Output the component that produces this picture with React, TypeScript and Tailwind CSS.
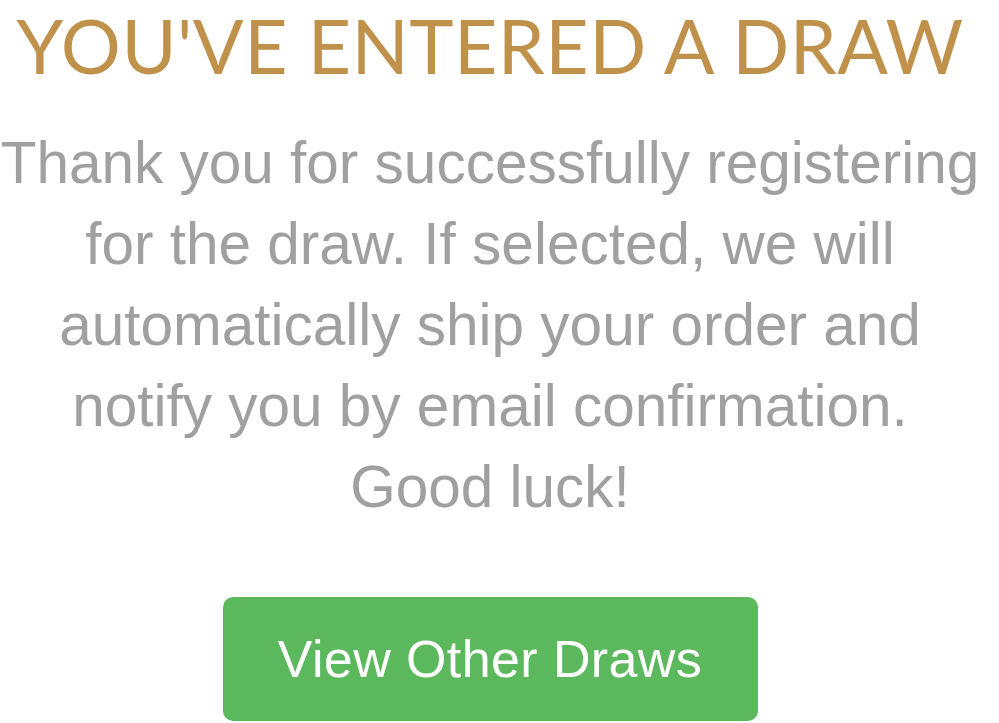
export default function App() {
  return (
    <div className="w-[999px] h-[723px] bg-white overflow-hidden">
      <div className="w-[980px] flex flex-col items-center">
        <h1 className="mt-[3px] font-[Lato,sans-serif] text-[75px] leading-[84px] tracking-[0.5px] text-[#c0914b] text-center whitespace-nowrap">
          YOU'VE ENTERED A DRAW
        </h1>
        <p className="mt-[35px] font-['Liberation_Sans',Arial,sans-serif] text-[58.5px] leading-[81px] text-[#a0a0a0] text-center whitespace-nowrap">
          Thank you for successfully registering
          <br />
          for the draw. If selected, we will
          <br />
          automatically ship your order and
          <br />
          notify you by email confirmation.
          <br />
          Good luck!
        </p>
        <button className="mt-[70px] w-[535px] h-[124px] shrink-0 rounded-[10px] bg-[#5cb85c] font-['Liberation_Sans',Arial,sans-serif] text-[52px] tracking-[0.4px] text-white">
          View Other Draws
        </button>
      </div>
    </div>
  );
}
